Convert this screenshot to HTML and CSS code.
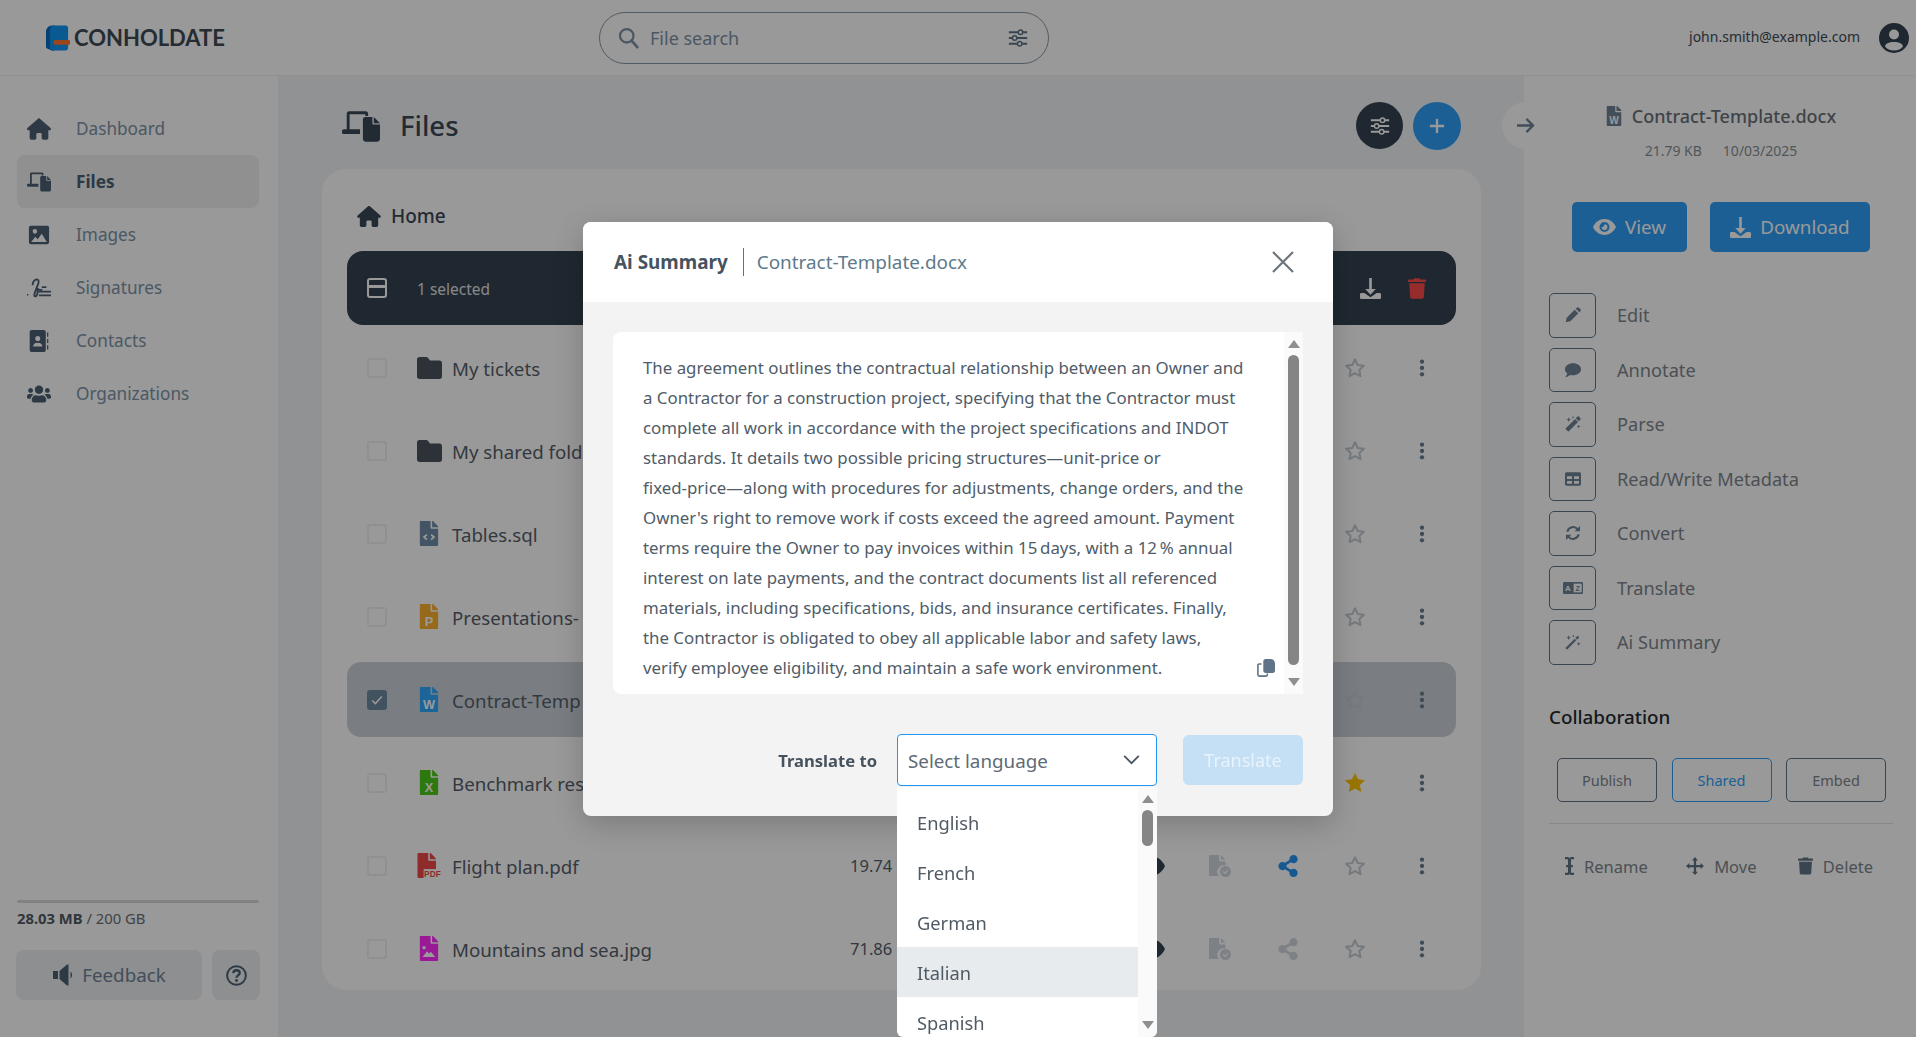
FILE: index.html
```html
<!DOCTYPE html>
<html lang="en">
<head>
    <meta charset="UTF-8">
    <meta name="viewport" content="width=device-width, initial-scale=1.0">
    <title>Conholdate Files</title>
    <link rel="stylesheet" href="styles.css">
</head>
<body>

<svg class="sprite" xmlns="http://www.w3.org/2000/svg">
    <symbol id="i-home" viewBox="0 0 576 512"><path d="M575.8 255.5c0 18-15 32.100-32 32.100h-32l.7 160.200c0 2.700-.2 5.400-.5 8.100V472c0 22.100-17.900 40-40 40H392c-22.100 0-40-17.900-40-40V384c0-17.700-14.300-32-32-32H256c-17.700 0-32 14.300-32 32v88c0 22.100-17.900 40-40 40H104c-22.100 0-40-17.900-40-40V360c0-.9 0-1.900.1-2.800V287.600H32c-18 0-32-14-32-32.100 0-9 3-17 10-24L266.400 8c7-7 15-8 22-8s15 2 21 7L564.800 231.500c8 7 12 15 11 24z"/></symbol>
    <symbol id="i-devices" viewBox="0 0 40 32"><path d="M5 2.5C5 1 6 0 7.500 0H25c1.500 0 2.500 1 2.500 2.500V5H24.500V3H8v16H19v5H2c-1.200 0-2-.8-2-2v-1c0-1.200.8-2 2-2h3z"/><path d="M22 8.500C22 7.100 23 6 24.500 6H32v6.500c0 .8.700 1.500 1.500 1.500H40v15c0 1.700-1.300 3-3 3H25c-1.700 0-3-1.300-3-3z"/><path d="M33.500 6L40 12.500H33.500z"/></symbol>
    <symbol id="i-image" viewBox="0 0 24 24"><path fill-rule="evenodd" d="M3 2h18c1.100 0 2 .9 2 2v16c0 1.100-.9 2-2 2H3c-1.100 0-2-.9-2-2V4c0-1.100.9-2 2-2zm4.500 3.500a2.500 2.500 0 1 0 0 5 2.500 2.500 0 0 0 0-5zM3.500 19.500h17L15 10.500l-4.500 6-2.500-2.500z"/></symbol>
    <symbol id="i-sign" viewBox="0 0 26 22"><path d="M0 17.500h1.500V19H0z"/><path fill="none" stroke="currentColor" stroke-width="2" d="M6 8c0-4 3-7 5.500-6S12 7 10 12s-3 8-1 8 3-5 2.500-8c2 1 3 2.500 5 .5"/><path d="M12 14h14v2H12zM13 18h13v2H13zM16 9h5v2h-5z"/></symbol>
    <symbol id="i-contact" viewBox="0 0 22 26"><path fill-rule="evenodd" d="M2.500 0h14C18 0 19 1 19 2.500v21c0 1.500-1 2.500-2.500 2.500h-14C1 26 0 25 0 23.500v-21C0 1 1 0 2.500 0zm7 7a3 3 0 1 0 0 6 3 3 0 0 0 0-6zM4 19.500h11c0-3-2-4.500-5.500-4.500S4 16.500 4 19.500z"/><path d="M20.500 3H22v5h-1.500zM20.500 10.500H22v5h-1.500zM20.500 18H22v5h-1.500z"/></symbol>
    <symbol id="i-users" viewBox="0 0 640 512"><path d="M96 224c35.300 0 64-28.700 64-64s-28.700-64-64-64-64 28.700-64 64 28.700 64 64 64zm448 0c35.300 0 64-28.700 64-64s-28.700-64-64-64-64 28.700-64 64 28.700 64 64 64zm32 32h-64c-17.600 0-33.500 7.100-45.100 18.600 40.300 22.100 68.900 62 75.100 109.400h66c17.700 0 32-14.300 32-32v-32c0-35.300-28.700-64-64-64zm-256 0c61.900 0 112-50.100 112-112S381.900 32 320 32 208 82.100 208 144s50.100 112 112 112zm76.800 32h-8.300c-20.800 10-43.900 16-68.500 16s-47.600-6-68.500-16h-8.300C179.600 288 128 339.600 128 403.200V432c0 26.500 21.500 48 48 48h288c26.500 0 48-21.500 48-48v-28.800c0-63.600-51.600-115.200-115.200-115.200zm-223.700-13.400C161.500 263.100 145.600 256 128 256H64c-35.300 0-64 28.700-64 64v32c0 17.700 14.300 32 32 32h65.900c6.300-47.400 34.900-87.300 75.200-109.400z"/></symbol>
    <symbol id="i-sliders" viewBox="0 0 24 24"><path fill="none" stroke="currentColor" stroke-width="2.400" d="M1 5h22M1 12h22M1 19h22"/><circle cx="15" cy="5" r="2.700" fill="var(--knob, #fff)" stroke="currentColor" stroke-width="1.800"/><circle cx="8" cy="12" r="2.700" fill="var(--knob, #fff)" stroke="currentColor" stroke-width="1.800"/><circle cx="14" cy="19" r="2.700" fill="var(--knob, #fff)" stroke="currentColor" stroke-width="1.800"/></symbol>
    <symbol id="i-search" viewBox="0 0 24 24"><circle cx="10" cy="10" r="7.700" fill="none" stroke="currentColor" stroke-width="2.600"/><path d="M15.500 15.500L22 23" stroke="currentColor" stroke-width="3.200" stroke-linecap="round"/></symbol>
    <symbol id="i-file" viewBox="0 0 384 512"><path d="M224 136V0H24C10.700 0 0 10.700 0 24v464c0 13.300 10.700 24 24 24h336c13.300 0 24-10.700 24-24V160H248c-13.200 0-24-10.800-24-24zm160-14.100v6.100H256V0h6.100c6.400 0 12.500 2.500 17 7l97.900 98c4.500 4.500 7 10.600 7 16.900z"/></symbol>
    <symbol id="i-folder" viewBox="0 0 25 22"><path d="M2.500 0h6.500c1 0 1.700.4 2.300 1.200L13 3.500h9.500C24 3.500 25 4.500 25 6v13.500c0 1.500-1 2.500-2.500 2.500h-20C1 22 0 21 0 19.500v-17C0 1 1 0 2.500 0z"/></symbol>
    <symbol id="i-star" viewBox="0 0 24 24"><path fill="none" stroke="currentColor" stroke-width="2.200" stroke-linejoin="round" d="M12 2.500l2.900 6.200 6.800.8-5 4.700 1.300 6.700-6-3.300-6 3.300 1.300-6.700-5-4.700 6.800-.8z"/></symbol>
    <symbol id="i-star-fill" viewBox="0 0 24 24"><path d="M12 1l3.300 7 7.700.9-5.700 5.300 1.500 7.600-6.800-3.700-6.800 3.700 1.500-7.600L1 8.900 8.700 8z"/></symbol>
    <symbol id="i-kebab" viewBox="0 0 6 20"><circle cx="3" cy="3" r="2.400"/><circle cx="3" cy="10" r="2.400"/><circle cx="3" cy="17" r="2.400"/></symbol>
    <symbol id="i-eye" viewBox="0 0 32 22"><path fill-rule="evenodd" d="M16 0c7 0 13 4.500 16 11-3 6.500-9 11-16 11S3 17.500 0 11C3 4.500 9 0 16 0zm0 4a7 7 0 1 0 0 14 7 7 0 0 0 0-14zm0 3a4 4 0 1 1-4 4c1.500 1 4-1.500 4-4z"/></symbol>
    <symbol id="i-share" viewBox="0 0 448 512"><path d="M352 320c-22.600 0-43.400 7.800-59.800 20.900l-102.500-64.100a96.600 96.600 0 0 0 0-41.700l102.500-64.100C308.600 184.200 329.400 192 352 192c53 0 96-43 96-96S405 0 352 0s-96 43-96 96c0 7.200.8 14.100 2.300 20.800L155.800 181C139.400 167.800 118.600 160 96 160c-53 0-96 43-96 96s43 96 96 96c22.600 0 43.400-7.800 59.800-20.900l102.500 64.100A96.300 96.300 0 0 0 256 416c0 53 43 96 96 96s96-43 96-96-43-96-96-96z"/></symbol>
    <symbol id="i-download" viewBox="0 0 24 24"><path d="M10.500 0h3v12.500h4.500l-6 6.500-6-6.500h4.500z"/><path d="M1.500 17H5l7 5 7-5h3.500c.8 0 1.500.7 1.500 1.500v4c0 .8-.7 1.500-1.500 1.500h-21C.7 24 0 23.300 0 22.500v-4C0 17.700.7 17 1.500 17z"/></symbol>
    <symbol id="i-trash" viewBox="0 0 448 512"><path d="M432 32H312l-9.400-18.700A24 24 0 0 0 281.100 0H166.800a23.700 23.700 0 0 0-21.400 13.300L136 32H16A16 16 0 0 0 0 48v32a16 16 0 0 0 16 16h416a16 16 0 0 0 16-16V48a16 16 0 0 0-16-16zM53.200 467a48 48 0 0 0 47.900 45h245.800a48 48 0 0 0 47.900-45L416 128H32z"/></symbol>
    <symbol id="i-pencil" viewBox="0 0 24 24"><path d="M1 23l1.500-7L14.500 4l5.500 5.500L8 21.500zM16 2.500l1.500-1.500c1-1 2.500-1 3.500 0l2 2c1 1 1 2.500 0 3.500L21.500 8z"/></symbol>
    <symbol id="i-comment" viewBox="0 0 24 22"><path d="M12 1c6.500 0 12 3.800 12 9s-5.500 9-12 9c-1.500 0-3-.2-4.300-.6C5.500 20 3 21.500.5 21.500c1.500-1.500 2.500-3.500 2.800-5.500C1.200 14.500 0 12.300 0 10 0 4.800 5.500 1 12 1z"/></symbol>
    <symbol id="i-wand" viewBox="0 0 24 24"><path d="M3 23.500L.5 21 14.500 7l2.500 2.500zM18 8.500L15.500 6 19 2.500 21.500 5z"/><path d="M5.500 2l1 2.500L9 5.500 6.500 6.500l-1 2.500-1-2.500L2 5.500l2.500-1zM20.500 12l.8 2 2.200.8-2.200.8-.8 2-.8-2-2.200-.8 2.200-.8zM12.500 1l.6 1.400L14.500 3l-1.400.6-.6 1.400-.6-1.400L10.500 3l1.400-.6z"/></symbol>
    <symbol id="i-wand-thick" viewBox="0 0 24 24"><path d="M5 23.500L.5 19 15 4.500 19.500 9z"/><path d="M20.500 8L16 3.500 18.500 1c.7-.7 1.800-.7 2.500 0l2 2c.7.7.7 1.800 0 2.500z"/><path d="M5.500 2l1 2.500L9 5.500 6.500 6.500l-1 2.500-1-2.500L2 5.500l2.500-1zM20.500 13l.8 2 2.200.8-2.200.8-.8 2-.8-2-2.200-.8 2.200-.8zM12 0l.6 1.400 1.400.6-1.400.6L12 4l-.6-1.400L10 2l1.400-.6z"/></symbol>
    <symbol id="i-table" viewBox="0 0 24 20"><path fill-rule="evenodd" d="M2.500 0h19C23 0 24 1 24 2.500v15c0 1.500-1 2.500-2.500 2.500h-19C1 20 0 19 0 17.500v-15C0 1 1 0 2.500 0zM3 6v4h7.500V6zm10.500 0v4H21V6zM3 13v4h7.500v-4zm10.500 0v4H21v-4z"/></symbol>
    <symbol id="i-sync" viewBox="0 0 24 24"><path fill="none" stroke="currentColor" stroke-width="3" d="M3.500 10A8.800 8.800 0 0 1 19 6.500M20.500 14A8.800 8.800 0 0 1 5 17.500"/><path d="M22.500 1.500v8h-8zM1.500 22.500v-8h8z"/></symbol>
    <symbol id="i-lang" viewBox="0 0 30 18"><rect width="30" height="18" rx="2"/><text x="7.500" y="14" font-size="12" font-weight="700" text-anchor="middle" fill="#fff" font-family="Liberation Sans, sans-serif">A</text><rect x="16" y="2.500" width="12" height="13" fill="#fff"/><text x="22" y="13.500" font-size="11" font-weight="700" text-anchor="middle" font-family="Liberation Sans, sans-serif">Z</text></symbol>
    <symbol id="i-copy" viewBox="0 0 20 20"><path fill="none" stroke="currentColor" stroke-width="1.800" d="M5 5.500H2.500C1.700 5.500 1 6.200 1 7v10.500c0 .8.700 1.500 1.500 1.500h7.500c.8 0 1.500-.7 1.500-1.500V16"/><path d="M7 2.500C7 1.100 8.100 0 9.500 0H15c2.800 0 5 2.200 5 5v8c0 1.400-1.100 2.500-2.500 2.500h-8C8.100 15.500 7 14.400 7 13z"/></symbol>
    <symbol id="i-move" viewBox="0 0 24 24"><path d="M12 0l4 4.500h-2.500V10.500H19.500V8l4.500 4-4.500 4v-2.500H13.500V19.500H16L12 24l-4-4.500h2.500V13.500H4.500V16L0 12l4.500-4v2.500H10.500V4.500H8z"/></symbol>
    <symbol id="i-cursor" viewBox="0 0 12 24"><path d="M0 0h4.500L6 1.500 7.500 0H12v3H8v7.500h2.500v3H8V21h4v3H7.500L6 22.500 4.500 24H0v-3h4v-7.500H1.500v-3H4V3H0z"/></symbol>
    <symbol id="i-speaker" viewBox="0 0 24 24"><path d="M1 8h5v8H1zM7.500 8L15 1.500h1.500v21H15L7.500 16zM18.500 8.500c2 1.500 2 5.500 0 7z"/></symbol>
    <symbol id="i-help" viewBox="0 0 24 24"><circle cx="12" cy="12" r="10.700" fill="none" stroke="currentColor" stroke-width="2.300"/><path fill="none" stroke="currentColor" stroke-width="2.600" d="M8.300 9.300C8.500 7 10 6 12 6s3.700 1.200 3.700 3.200c0 2.600-3.700 2.600-3.700 5.300"/><circle cx="12" cy="17.700" r="1.600"/></symbol>
    <symbol id="i-avatar" viewBox="0 0 30 30"><path fill-rule="evenodd" d="M15 0a15 15 0 1 1 0 30 15 15 0 0 1 0-30zm0 6.500a5 5 0 1 0 0 10 5 5 0 0 0 0-10zM6 23.500C8 26 11 27.500 15 27.500s7-1.500 9-4c-.5-3-3.500-4.500-9-4.500s-8.500 1.500-9 4.500z"/></symbol>
    <symbol id="i-filecheck" viewBox="0 0 24 24"><path d="M11 0v6c0 .6.400 1 1 1h6v4.500a7 7 0 0 0-7 11.500H1c-.6 0-1-.4-1-1V1c0-.6.400-1 1-1zM13 0l5 5h-5z"/><circle cx="18" cy="18" r="6"/><path d="M15.500 18l2 2 3-3.500" fill="none" stroke="#fff" stroke-width="1.200"/></symbol>
</svg>

<div class="app">
    <header class="topbar">
        <div class="logo">
            <svg class="logo-mark" viewBox="0 0 25 26"><path fill="#0b6cbc" d="M6 0h3v26H6l-5-2c-.6-.3-1-.8-1-1.500V6c0-3 3-6 6-6z"/><path fill="#1094f5" d="M4 5c0-3 2-5 5-5h11c2 0 3 1 3 3v20c0 2-1 3-3 3H6c-1 0-2-1-2-2z"/><rect x="8" y="15" width="17" height="5" rx="1" fill="#ff7532"/></svg>
            <span>CONHOLDATE</span>
        </div>
        <div class="search">
            <svg class="search-icon"><use href="#i-search"/></svg>
            <span class="search-text">File search</span>
            <svg class="search-filter"><use href="#i-sliders"/></svg>
        </div>
        <div class="account">
            <span>john.smith@example.com</span>
            <svg class="avatar"><use href="#i-avatar"/></svg>
        </div>
    </header>

    <div class="columns">
        <aside class="sidebar">
            <nav class="nav">
                <a class="nav-item"><svg><use href="#i-home"/></svg>Dashboard</a>
                <a class="nav-item active"><svg><use href="#i-devices"/></svg>Files</a>
                <a class="nav-item"><svg><use href="#i-image"/></svg>Images</a>
                <a class="nav-item"><svg><use href="#i-sign"/></svg>Signatures</a>
                <a class="nav-item"><svg><use href="#i-contact"/></svg>Contacts</a>
                <a class="nav-item"><svg><use href="#i-users"/></svg>Organizations</a>
            </nav>
            <div class="quota">
                <div class="quota-bar"></div>
                <p><strong>28.03 MB</strong> / 200 GB</p>
                <div class="quota-buttons">
                    <button class="btn-feedback"><svg><use href="#i-speaker"/></svg>Feedback</button>
                    <button class="btn-help"><svg><use href="#i-help"/></svg></button>
                </div>
            </div>
        </aside>

        <main class="main">
            <div class="main-head">
                <svg class="title-icon"><use href="#i-devices"/></svg>
                <h1>Files</h1>
                <button class="circle dark"><svg><use href="#i-sliders"/></svg></button>
                <button class="circle blue"><svg viewBox="0 0 18 18"><path d="M9 1v16M1 9h16" fill="none" stroke="currentColor" stroke-width="2.600"/></svg></button>
            </div>
            <section class="card">
                <div class="crumb"><svg><use href="#i-home"/></svg>Home</div>
                <div class="select-bar">
                    <span class="check minus"></span>
                    <span class="select-count">1 selected</span>
                    <svg class="bar-download"><use href="#i-download"/></svg>
                    <svg class="bar-trash"><use href="#i-trash"/></svg>
                </div>

                <div class="row">
                    <span class="check"></span>
                    <svg class="ficon folder"><use href="#i-folder"/></svg>
                    <span class="name">My tickets</span>
                    <span class="size"></span>
                    <span></span><span></span><span></span>
                    <svg class="star"><use href="#i-star"/></svg>
                    <svg class="kebab"><use href="#i-kebab"/></svg>
                </div>
                <div class="row">
                    <span class="check"></span>
                    <svg class="ficon folder"><use href="#i-folder"/></svg>
                    <span class="name">My shared fold</span>
                    <span class="size"></span>
                    <span></span><span></span><span></span>
                    <svg class="star"><use href="#i-star"/></svg>
                    <svg class="kebab"><use href="#i-kebab"/></svg>
                </div>
                <div class="row">
                    <span class="check"></span>
                    <svg class="ficon sql" viewBox="0 0 384 512"><use href="#i-file"/><path d="M150 280l-60 50 60 50M234 280l60 50-60 50" fill="none" stroke="#fff" stroke-width="36"/></svg>
                    <span class="name">Tables.sql</span>
                    <span class="size"></span>
                    <span></span><span></span><span></span>
                    <svg class="star"><use href="#i-star"/></svg>
                    <svg class="kebab"><use href="#i-kebab"/></svg>
                </div>
                <div class="row">
                    <span class="check"></span>
                    <svg class="ficon ppt" viewBox="0 0 384 512"><use href="#i-file"/><text x="192" y="450" class="ficon-letter">P</text></svg>
                    <span class="name">Presentations-</span>
                    <span class="size"></span>
                    <span></span><span></span><span></span>
                    <svg class="star"><use href="#i-star"/></svg>
                    <svg class="kebab"><use href="#i-kebab"/></svg>
                </div>
                <div class="row selected">
                    <span class="check on"><svg viewBox="0 0 20 20"><path d="M4 10.500l4 4 8-9" fill="none" stroke="#fff" stroke-width="1.800"/></svg></span>
                    <svg class="ficon word" viewBox="0 0 384 512"><use href="#i-file"/><text x="192" y="450" class="ficon-letter">W</text></svg>
                    <span class="name">Contract-Temp</span>
                    <span class="size"></span>
                    <span></span><span></span><span></span>
                    <svg class="star"><use href="#i-star"/></svg>
                    <svg class="kebab"><use href="#i-kebab"/></svg>
                </div>
                <div class="row">
                    <span class="check"></span>
                    <svg class="ficon excel" viewBox="0 0 384 512"><use href="#i-file"/><text x="192" y="450" class="ficon-letter">X</text></svg>
                    <span class="name">Benchmark res</span>
                    <span class="size"></span>
                    <span></span><span></span><span></span>
                    <svg class="star gold"><use href="#i-star-fill"/></svg>
                    <svg class="kebab"><use href="#i-kebab"/></svg>
                </div>
                <div class="row">
                    <span class="check"></span>
                    <svg class="ficon pdf" viewBox="0 0 480 512"><use href="#i-file" width="384" height="512"/><rect x="130" y="330" width="350" height="182" fill="#fff"/><text x="140" y="500" textLength="340" lengthAdjust="spacingAndGlyphs" class="ficon-pdf">PDF</text></svg>
                    <span class="name">Flight plan.pdf</span>
                    <span class="size">19.74</span>
                    <svg class="act eye"><use href="#i-eye"/></svg>
                    <svg class="act pale"><use href="#i-filecheck"/></svg>
                    <svg class="act share on"><use href="#i-share"/></svg>
                    <svg class="star"><use href="#i-star"/></svg>
                    <svg class="kebab"><use href="#i-kebab"/></svg>
                </div>
                <div class="row">
                    <span class="check"></span>
                    <svg class="ficon pic" viewBox="0 0 384 512"><use href="#i-file"/><circle cx="90" cy="240" r="36" fill="#fff"/><path d="M60 430l90-120 40 50 40-40 90 110z" fill="#fff"/></svg>
                    <span class="name">Mountains and sea.jpg</span>
                    <span class="size">71.86</span>
                    <svg class="act eye"><use href="#i-eye"/></svg>
                    <svg class="act pale"><use href="#i-filecheck"/></svg>
                    <svg class="act share"><use href="#i-share"/></svg>
                    <svg class="star"><use href="#i-star"/></svg>
                    <svg class="kebab"><use href="#i-kebab"/></svg>
                </div>
            </section>
        </main>

        <aside class="details">
            <button class="collapse"><svg viewBox="0 0 20 18"><path d="M1 9h17M11 2l7 7-7 7" fill="none" stroke="currentColor" stroke-width="2.400"/></svg></button>
            <div class="details-name">
                <svg viewBox="0 0 384 512"><use href="#i-file"/><text x="192" y="450" class="ficon-letter">W</text></svg>
                Contract-Template.docx
            </div>
            <div class="details-meta"><span>21.79 KB</span><span>10/03/2025</span></div>
            <div class="details-buttons">
                <button class="btn-primary view"><svg class="btn-eye"><use href="#i-eye"/></svg>View</button>
                <button class="btn-primary download"><svg><use href="#i-download"/></svg>Download</button>
            </div>
            <ul class="actions">
                <li><span class="action-box"><svg><use href="#i-pencil"/></svg></span>Edit</li>
                <li><span class="action-box"><svg><use href="#i-comment"/></svg></span>Annotate</li>
                <li><span class="action-box"><svg><use href="#i-wand-thick"/></svg></span>Parse</li>
                <li><span class="action-box"><svg><use href="#i-table"/></svg></span>Read/Write Metadata</li>
                <li><span class="action-box"><svg><use href="#i-sync"/></svg></span>Convert</li>
                <li><span class="action-box"><svg class="wide"><use href="#i-lang"/></svg></span>Translate</li>
                <li><span class="action-box"><svg><use href="#i-wand"/></svg></span>Ai Summary</li>
            </ul>
            <h2>Collaboration</h2>
            <div class="collab">
                <button>Publish</button>
                <button class="on">Shared</button>
                <button>Embed</button>
            </div>
            <div class="file-ops">
                <span><svg class="op-cursor"><use href="#i-cursor"/></svg>Rename</span>
                <span class="op-move"><svg><use href="#i-move"/></svg>Move</span>
                <span><svg class="op-trash"><use href="#i-trash"/></svg>Delete</span>
            </div>
        </aside>
    </div>
</div>

<div class="overlay"></div>

<div class="modal">
    <div class="modal-head">
        <strong>Ai Summary</strong>
        <span class="modal-file">Contract-Template.docx</span>
        <svg class="modal-close" viewBox="0 0 24 24"><path d="M2 2l20 20M22 2L2 22" fill="none" stroke="currentColor" stroke-width="2.200"/></svg>
    </div>
    <div class="modal-body">
        <div class="summary">
            <p>The agreement outlines the contractual relationship between an Owner and<br>
            a Contractor for a construction project, specifying that the Contractor must<br>
            complete all work in accordance with the project specifications and INDOT<br>
            standards. It details two possible pricing structures—unit-price or<br>
            fixed-price—along with procedures for adjustments, change orders, and the<br>
            Owner's right to remove work if costs exceed the agreed amount. Payment<br>
            terms require the Owner to pay invoices within 15&#8201;days, with a 12&#8201;% annual<br>
            interest on late payments, and the contract documents list all referenced<br>
            materials, including specifications, bids, and insurance certificates. Finally,<br>
            the Contractor is obligated to obey all applicable labor and safety laws,<br>
            verify employee eligibility, and maintain a safe work environment.</p>
            <svg class="copy"><use href="#i-copy"/></svg>
            <div class="scroll">
                <i class="arrow-up"></i>
                <i class="thumb"></i>
                <i class="arrow-down"></i>
            </div>
        </div>
        <div class="translate">
            <label>Translate to</label>
            <div class="lang-select">
                <div class="lang-input">Select language
                    <svg viewBox="0 0 20 12"><path d="M2 2l8 8 8-8" fill="none" stroke="currentColor" stroke-width="2"/></svg>
                </div>
                <div class="lang-menu">
                    <ul>
                        <li>English</li>
                        <li>French</li>
                        <li>German</li>
                        <li class="hover">Italian</li>
                        <li>Spanish</li>
                    </ul>
                    <div class="scroll">
                        <i class="arrow-up"></i>
                        <i class="thumb short"></i>
                        <i class="arrow-down"></i>
                    </div>
                </div>
            </div>
            <button class="btn-translate">Translate</button>
        </div>
    </div>
</div>

</body>
</html>
```

FILE: styles.css
```css
* {
    box-sizing: border-box;
}
html, body {
    height: 100%;
}
body {
    margin: 0;
    overflow: hidden;
    font-family: "Noto Sans", "Open Sans", sans-serif;
    font-size: 17px;
    color: #56606a;
    background-color: #fff;
}
svg {
    fill: currentColor;
    flex: none;
}
button {
    font-family: inherit;
    cursor: pointer;
}
ul {
    list-style: none;
    margin: 0;
    padding: 0;
}
.sprite {
    display: none;
}

.app {
    height: 100%;
    display: flex;
    flex-direction: column;
}
.topbar {
    height: 76px;
    flex: none;
    display: flex;
    align-items: center;
    border-bottom: 1px solid #f2f2f2;
    position: relative;
}
.logo {
    width: 553px;
    padding-left: 46px;
    display: flex;
    align-items: center;
    gap: 4px;
    font-family: Lato, sans-serif;
    font-size: 22px;
    font-weight: 700;
    color: #3f4a54;
}
.logo-mark {
    width: 24px;
    height: 26px;
}
.search {
    width: 450px;
    height: 52px;
    margin-left: 46px;
    border: 1px solid #8a9aa8;
    border-radius: 26px;
    display: flex;
    align-items: center;
    padding: 0 20px 0 18px;
    color: #7d93a7;
}
.search-icon {
    width: 21px;
    height: 23px;
}
.search-text {
    margin-left: 11px;
    flex: 1;
    font-size: 18px;
}
.search-filter {
    width: 20px;
    height: 20px;
    color: #5f7486;
}
.account {
    margin-left: auto;
    display: flex;
    align-items: center;
    gap: 19px;
    padding-right: 7px;
    font-size: 14px;
    color: #3e4c58;
}
.account span {
    padding-bottom: 2px;
}
.avatar {
    width: 30px;
    height: 30px;
    color: #344350;
}

.columns {
    flex: 1;
    min-height: 0;
    display: flex;
}

.sidebar {
    width: 278px;
    flex: none;
    display: flex;
    flex-direction: column;
    padding: 26px 19px 37px 17px;
}
.nav-item {
    height: 53px;
    display: flex;
    align-items: center;
    padding-left: 10px;
    border-radius: 8px;
    font-size: 17.2px;
    color: #7d93a7;
}
.nav-item svg {
    width: 24px;
    height: 22px;
    margin-right: 25px;
    color: #4b6073;
}
.nav-item.active {
    background-color: #f0f0f0;
    font-weight: 700;
    color: #4b6073;
}
.quota {
    margin-top: auto;
}
.quota-bar {
    height: 3px;
    background-color: #d5d9dc;
    border-radius: 2px;
}
.quota p {
    margin: 5px 0 22px;
    font-size: 14.8px;
    line-height: 20px;
    color: #6a7178;
}
.quota strong {
    color: #505a64;
}
.quota-buttons {
    display: flex;
    gap: 10px;
    margin-left: -1px;
}
.btn-feedback, .btn-help {
    height: 50px;
    flex: none;
    border: none;
    border-radius: 8px;
    background-color: #eceef0;
    display: flex;
    align-items: center;
    justify-content: center;
    color: #6f8396;
    font-size: 18.8px;
}
.btn-feedback {
    width: 186px;
    padding: 0;
}
.btn-feedback svg {
    width: 24px;
    height: 24px;
    margin-right: 6px;
    color: #4b6073;
}
.btn-help {
    width: 48px;
    padding: 0;
}
.btn-help svg {
    width: 21px;
    height: 21px;
    color: #4b6073;
}

.main {
    flex: 1;
    min-width: 0;
    display: flex;
    flex-direction: column;
    background-color: #f2f3f5;
    padding: 0 43px 47px 44px;
}
.main-head {
    height: 93px;
    flex: none;
    display: flex;
    align-items: center;
    padding: 6px 20px 0 20px;
    color: #3a4855;
}
.title-icon {
    width: 38px;
    height: 31px;
    margin: 2px 20px 0 0;
}
.main-head h1 {
    margin: 0 auto 0 0;
    font-size: 27.5px;
    font-weight: 500;
    color: #3a4855;
}
.circle {
    width: 47px;
    height: 47px;
    border: none;
    border-radius: 50%;
    padding: 0;
    display: flex;
    align-items: center;
    justify-content: center;
    color: #fff;
}
.circle.dark {
    background-color: #344350;
    margin-right: 10px;
    --knob: #344350;
}
.circle.dark svg {
    width: 20px;
    height: 20px;
}
.circle.blue {
    width: 48px;
    height: 48px;
    background-color: #2e9ff9;
}
.circle.blue svg {
    width: 16px;
    height: 16px;
}

.card {
    flex: 1;
    min-height: 0;
    overflow: hidden;
    background-color: #fff;
    border-radius: 24px;
    padding: 0 25px;
}
.crumb {
    height: 82px;
    display: flex;
    align-items: center;
    padding: 12px 0 0 10px;
    font-size: 19px;
    font-weight: 500;
    color: #3a4855;
}
.crumb svg {
    width: 24px;
    height: 21px;
    margin-right: 10px;
}
.select-bar {
    height: 74px;
    display: flex;
    align-items: center;
    margin-bottom: 5px;
    padding-left: 20px;
    background-color: #344350;
    border-radius: 16px;
    font-size: 15.5px;
    color: #fff;
}
.select-count {
    margin-left: 30px;
    padding-top: 2px;
    opacity: 0.85;
}
.bar-download {
    width: 21px;
    height: 21px;
    margin-left: auto;
    color: #fff;
}
.bar-trash {
    width: 18px;
    height: 21px;
    margin: 0 30px 0 27px;
    color: #fa4a48;
}
.check {
    width: 20px;
    height: 20px;
    display: block;
    border: 2px solid #eef0f2;
    border-radius: 3px;
}
.check.minus {
    border-color: #fff;
    position: relative;
}
.check.minus::after {
    content: "";
    position: absolute;
    left: 0;
    right: 0;
    top: 5px;
    height: 3px;
    background-color: #fff;
}
.check.on {
    background-color: #6f8ba0;
    border-color: #6f8ba0;
}
.check.on svg {
    display: block;
    width: 16px;
    height: 16px;
}

.row {
    height: 75px;
    margin-bottom: 8px;
    padding-left: 20px;
    display: grid;
    grid-template-columns: 50px 35px 398px 265px 70px 70px 66px 68px 66px;
    align-items: center;
    justify-items: start;
    border-radius: 14px;
    font-size: 18.7px;
    color: #56606a;
}
.row.selected {
    background-color: #cbd3da;
}
.ficon {
    width: 20px;
    height: 25px;
    margin-left: 2px;
}
.ficon.folder {
    width: 25px;
    height: 22px;
    margin-left: 0;
    color: #4b545e;
}
.ficon.sql { color: #708ea8; }
.ficon.ppt { color: #fbb030; }
.ficon.word { color: #2fa8ff; }
.ficon.excel { color: #4cc91a; }
.ficon.pdf {
    width: 24px;
    margin-left: 0;
    color: #ee4846;
}
.ficon.pic { color: #ff2bfa; }
.ficon-letter {
    font-family: "Liberation Sans", sans-serif;
    font-size: 260px;
    font-weight: 700;
    text-anchor: middle;
    fill: #fff;
}
.ficon-pdf {
    font-family: "Liberation Sans", sans-serif;
    font-size: 200px;
    font-weight: 700;
    fill: #ee4846;
}
.name {
    white-space: nowrap;
    padding-top: 2px;
}
.size {
    font-size: 16.5px;
}
.act {
    width: 24px;
    height: 22px;
    justify-self: center;
}
.act.eye {
    width: 30px;
    color: #344350;
}
.act.pale {
    color: #d0d8df;
}
.act.share {
    width: 20px;
    color: #d0d8df;
}
.act.share.on {
    color: #2395f0;
}
.star {
    width: 22px;
    height: 22px;
    justify-self: center;
    color: #c4ccd4;
}
.star.gold {
    color: #ffc400;
}
.kebab {
    width: 6px;
    height: 18px;
    justify-self: center;
    color: #6a7f90;
}

.details {
    width: 392px;
    flex: none;
    position: relative;
    padding: 0 23px 0 25px;
}
.collapse {
    position: absolute;
    left: -22px;
    top: 26px;
    width: 47px;
    height: 47px;
    border: none;
    border-radius: 50%;
    background-color: #fff;
    padding: 0;
    color: #6f8396;
}
.collapse svg {
    display: block;
    width: 19px;
    height: 17px;
    margin: auto;
}
.details-name {
    margin-top: 27px;
    height: 26px;
    display: flex;
    align-items: center;
    justify-content: center;
    gap: 10px;
    font-size: 18px;
    font-weight: 500;
    color: #6a7178;
}
.details-name svg {
    width: 16px;
    height: 20px;
    color: #6f8396;
}
.details-meta {
    margin-top: 11px;
    display: flex;
    justify-content: center;
    gap: 21px;
    font-size: 14px;
    line-height: 22px;
    color: #8a9095;
}
.details-buttons {
    margin-top: 40px;
    display: flex;
    justify-content: center;
    gap: 23px;
}
.btn-primary {
    height: 50px;
    padding: 0;
    border: none;
    border-radius: 5px;
    background-color: #2e9ff9;
    color: #fff;
    font-size: 18.8px;
    display: flex;
    align-items: center;
    justify-content: center;
    gap: 9px;
}
.btn-primary.view {
    width: 115px;
}
.btn-primary.download {
    width: 160px;
}
.btn-primary svg {
    width: 21px;
    height: 21px;
}
.btn-primary svg.btn-eye {
    width: 23px;
    height: 16px;
}
.actions {
    margin-top: 41px;
}
.actions li {
    height: 44.500px;
    margin-bottom: 10px;
    display: flex;
    align-items: center;
    gap: 21px;
    font-size: 18.2px;
    color: #7e868d;
}
.action-box {
    width: 47px;
    height: 100%;
    border: 1px solid #5f7486;
    border-radius: 5px;
    display: flex;
    align-items: center;
    justify-content: center;
    color: #6f8396;
}
.action-box svg {
    width: 16px;
    height: 16px;
}
.action-box svg.wide {
    width: 20px;
    height: 12px;
}
.details h2 {
    margin: 39px 0 0;
    font-size: 18.8px;
    line-height: 26px;
    font-weight: 500;
    color: #222a31;
}
.collab {
    margin-top: 28px;
    padding: 0 7px 0 8px;
    display: flex;
    gap: 14.500px;
}
.collab button {
    width: 100px;
    height: 44px;
    border: 1px solid #5f7486;
    border-radius: 5px;
    background: none;
    color: #7e868d;
    font-size: 14.5px;
}
.collab button.on {
    border-color: #2e9ff9;
    color: #2e9ff9;
}
.file-ops {
    margin-top: 21px;
    padding: 31px 20px 0 16px;
    border-top: 1px solid #dfe2e4;
    display: flex;
    justify-content: space-between;
    color: #7e868d;
    font-size: 16.5px;
}
.file-ops span {
    display: flex;
    align-items: center;
    gap: 10px;
}
.file-ops .op-move {
    margin-left: -3px;
}
.file-ops svg {
    width: 18px;
    height: 18px;
    color: #5f7486;
}
.file-ops svg.op-cursor {
    width: 9px;
}
.file-ops svg.op-trash {
    width: 15px;
}

.overlay {
    position: fixed;
    inset: 0;
    background-color: rgba(0, 0, 0, 0.4);
}

.modal {
    position: absolute;
    left: 583px;
    top: 222px;
    width: 750px;
    background-color: #f3f3f3;
    border-radius: 8px;
    box-shadow: 0 8px 30px rgba(0, 0, 0, 0.2);
}
.modal-head {
    height: 80px;
    padding: 0 38px 0 31px;
    display: flex;
    align-items: center;
    background-color: #fff;
    border-radius: 8px 8px 0 0;
    font-size: 18.9px;
}
.modal-head strong {
    padding-right: 15px;
    border-right: 1px solid #5a7385;
    line-height: 28px;
    color: #46535f;
}
.modal-file {
    margin-left: 13px;
    color: #5e7a8c;
}
.modal-close {
    width: 24px;
    height: 24px;
    margin-left: auto;
    color: #6c757d;
}
.modal-body {
    padding: 30px 30px 30px;
}
.summary {
    height: 362px;
    background-color: #fff;
    border-radius: 8px 0 0 8px;
    position: relative;
    display: flex;
}
.summary p {
    flex: 1;
    margin: 0;
    padding: 21px 0 0 30px;
    font-size: 16.85px;
    line-height: 30px;
    color: #4f5c68;
    white-space: nowrap;
}
.copy {
    position: absolute;
    right: 28px;
    top: 327px;
    width: 18px;
    height: 18px;
    color: #5f7486;
}
.scroll {
    width: 19px;
    flex: none;
    display: flex;
    flex-direction: column;
    align-items: center;
    padding: 8px 0;
    background-color: #fafafa;
}
.arrow-up, .arrow-down {
    width: 0;
    height: 0;
    border-left: 6.500px solid transparent;
    border-right: 6.500px solid transparent;
}
.arrow-up {
    border-bottom: 8px solid #8f8f8f;
}
.arrow-down {
    border-top: 8px solid #8f8f8f;
    margin-top: auto;
}
.thumb {
    width: 11px;
    height: 310px;
    margin-top: 7px;
    border-radius: 6px;
    background-color: #858585;
}
.thumb.short {
    height: 36px;
}

.translate {
    margin-top: 40px;
    display: flex;
    align-items: center;
    justify-content: flex-end;
}
.translate label {
    font-weight: 700;
    font-size: 16.6px;
    color: #46535f;
}
.lang-select {
    width: 260px;
    margin-left: 20px;
    position: relative;
}
.lang-input {
    height: 52px;
    padding: 2px 15px 0 10px;
    border: 1px solid #2196f3;
    border-radius: 4px;
    background-color: #fff;
    display: flex;
    align-items: center;
    justify-content: space-between;
    font-size: 18.8px;
    color: #5e6b76;
}
.lang-input svg {
    width: 19px;
    height: 11px;
    margin-top: -3px;
    color: #4b5560;
}
.lang-menu {
    position: absolute;
    left: 0;
    right: 0;
    top: 53px;
    height: 250px;
    overflow: hidden;
    display: flex;
    background-color: #fff;
    border-radius: 0 0 6px 6px;
}
.lang-menu ul {
    flex: 1;
    padding-top: 10px;
}
.lang-menu li {
    height: 50px;
    padding-left: 20px;
    padding-top: 2px;
    line-height: 48px;
    font-size: 18.3px;
    color: #505a64;
}
.lang-menu li.hover {
    background-color: #e8ebee;
}
.btn-translate {
    width: 120px;
    height: 50px;
    margin-left: 26px;
    border: none;
    border-radius: 6px;
    background-color: #c5dff4;
    color: #e9f3fb;
    font-size: 18px;
}
```
